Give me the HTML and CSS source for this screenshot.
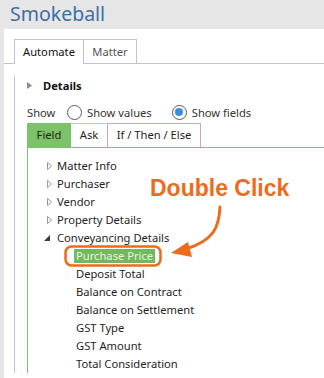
FILE: index.html
```html
<!DOCTYPE html>
<html lang="en">
<head>
    <meta charset="UTF-8">
    <meta name="viewport" content="width=device-width, initial-scale=1.0">
    <title>Smokeball - Automate</title>
    <link rel="stylesheet" href="styles.css">
</head>
<body>

<div class="titlebar">Smokeball</div>

<div class="frame">
    <div class="tabs">
        <div class="tab active">Automate</div>
        <div class="tab">Matter</div>
    </div>

    <div class="pane">
        <div class="details">
            <svg class="tri" width="5" height="7" viewBox="0 0 5 7"><path d="M0 0 L5 3.5 L0 7 Z" fill="#8c8c8c"/></svg>
            <span>Details</span>
        </div>

        <div class="show-row">
            <span class="show-label">Show</span>
            <label class="opt"><span class="radio"></span>Show values</label>
            <label class="opt second"><span class="radio checked"></span>Show fields</label>
        </div>

        <div class="subtabs">
            <div class="subtab field">Field</div>
            <div class="subtab ask">Ask</div>
            <div class="subtab cond">If / Then / Else</div>
        </div>

        <div class="fields">
            <ul class="tree">
                <li><svg class="tri" width="5" height="8" viewBox="0 0 5 8"><path d="M0.5 0.5 L4.5 4 L0.5 7.5 Z" fill="none" stroke="#9a9a9a"/></svg>Matter Info</li>
                <li><svg class="tri" width="5" height="8" viewBox="0 0 5 8"><path d="M0.5 0.5 L4.5 4 L0.5 7.5 Z" fill="none" stroke="#9a9a9a"/></svg>Purchaser</li>
                <li><svg class="tri" width="5" height="8" viewBox="0 0 5 8"><path d="M0.5 0.5 L4.5 4 L0.5 7.5 Z" fill="none" stroke="#9a9a9a"/></svg>Vendor</li>
                <li><svg class="tri" width="5" height="8" viewBox="0 0 5 8"><path d="M0.5 0.5 L4.5 4 L0.5 7.5 Z" fill="none" stroke="#9a9a9a"/></svg>Property Details</li>
                <li class="open"><svg class="tri down" width="6" height="6" viewBox="0 0 6 6"><path d="M6 0 L6 6 L0 6 Z" fill="#3a3a3a"/></svg>Conveyancing Details</li>
            </ul>
            <ul class="children">
                <li><span class="selected">Purchase Price</span></li>
                <li>Deposit Total</li>
                <li>Balance on Contract</li>
                <li>Balance on Settlement</li>
                <li>GST Type</li>
                <li>GST Amount</li>
                <li>Total Consideration</li>
            </ul>
        </div>
    </div>
</div>

<!-- annotation drawn over the screenshot -->
<div class="callout">Double Click</div>
<svg class="annotation" width="324" height="378" viewBox="0 0 324 378">
    <rect x="65.5" y="246.5" width="95" height="19" rx="6" fill="none" stroke="#ef6b1c" stroke-width="2.5"/>
    <path d="M220 207 C219 226 215 240 186 249" fill="none" stroke="#ef6b1c" stroke-width="3" stroke-linecap="round"/>
    <polygon points="171,253 188,242 192,257" fill="#ef6b1c"/>
</svg>

</body>
</html>
```

FILE: styles.css
```css
body {
    margin: 0;
    height: 378px;
    overflow: hidden;
    background: #e6e6e6;
    font-family: "Noto Sans", sans-serif;
    font-size: 11.2px;
    color: #1e1e1e;
    display: flex;
    flex-direction: column;
}
.titlebar {
    height: 29px;
    padding-left: 10px;
    font-size: 19.5px;
    line-height: 28px;
    color: #3d6fa6;
    box-sizing: border-box;
}
.frame {
    flex: 1;
    margin-left: 4px;
    padding-top: 10px;
    background: #fff;
}
.tabs {
    display: flex;
    padding-left: 10px;
    border-bottom: 1px solid #bac4d2;
}
.tab {
    box-sizing: border-box;
    height: 24px;
    padding-top: 1px;
    border: 1px solid #bac4d2;
    border-bottom: none;
    line-height: 21px;
    text-align: center;
    color: #555;
    width: 53px;
}
.tab + .tab {
    border-left: none;
}
.tab.active {
    width: 70px;
    height: 25px;
    margin-bottom: -1px;
    background: #fff;
    color: #111;
}
.pane {
    margin-left: 10px;
    padding-left: 12px;
    border-left: 1px solid #bac4d2;
}
.details {
    margin-top: 12px;
    height: 18px;
    display: flex;
    align-items: center;
    gap: 6px;
    font-weight: bold;
    color: #111;
}
.show-row {
    margin-top: 9px;
    height: 18px;
    display: flex;
    align-items: center;
    color: #333;
}
.show-label {
    width: 40px;
}
.opt {
    display: flex;
    align-items: center;
    gap: 5px;
}
.opt.second {
    margin-left: 20px;
}
.radio {
    box-sizing: border-box;
    width: 15px;
    height: 15px;
    border: 1px solid #5a5a5a;
    border-radius: 50%;
    display: flex;
    align-items: center;
    justify-content: center;
}
.radio.checked::after {
    content: "";
    width: 8px;
    height: 8px;
    border-radius: 50%;
    background: #3b8de4;
}
.subtabs {
    margin-top: 2px;
    display: flex;
    border-bottom: 1px solid #7cc46a;
}
.subtab {
    box-sizing: border-box;
    height: 24px;
    line-height: 22px;
    text-align: center;
    border: 1px solid transparent;
    border-bottom: none;
}
.subtab.field {
    width: 44px;
    background: #7cc26a;
    border-color: #7cc26a;
}
.subtab.ask {
    width: 36px;
    border-top-color: #a9c8e4;
}
.subtab.cond {
    width: 94px;
    border-color: #d8a4ac;
}
.fields {
    border-left: 1px solid #7cc46a;
    padding-top: 9px;
    padding-left: 19px;
}
.tree, .children {
    list-style: none;
    margin: 0;
    padding: 0;
}
.tree li, .children li {
    height: 18px;
    line-height: 18px;
    display: flex;
    align-items: center;
}
.tri {
    margin-right: 5px;
    flex-shrink: 0;
}
.tri.down {
    margin-left: -3px;
    margin-right: 7px;
}
.children {
    padding-left: 29px;
}
.selected {
    margin-left: -2px;
    padding: 0 2px;
    line-height: 14px;
    background: #72b85c;
    color: #eaf6e2;
}
.callout {
    position: absolute;
    left: 150px;
    top: 177px;
    font-family: "Liberation Sans", Arial, sans-serif;
    font-weight: bold;
    font-size: 23px;
    line-height: 23px;
    color: #ef6b1c;
}
.annotation {
    position: absolute;
    left: 0;
    top: 0;
    pointer-events: none;
}
```
